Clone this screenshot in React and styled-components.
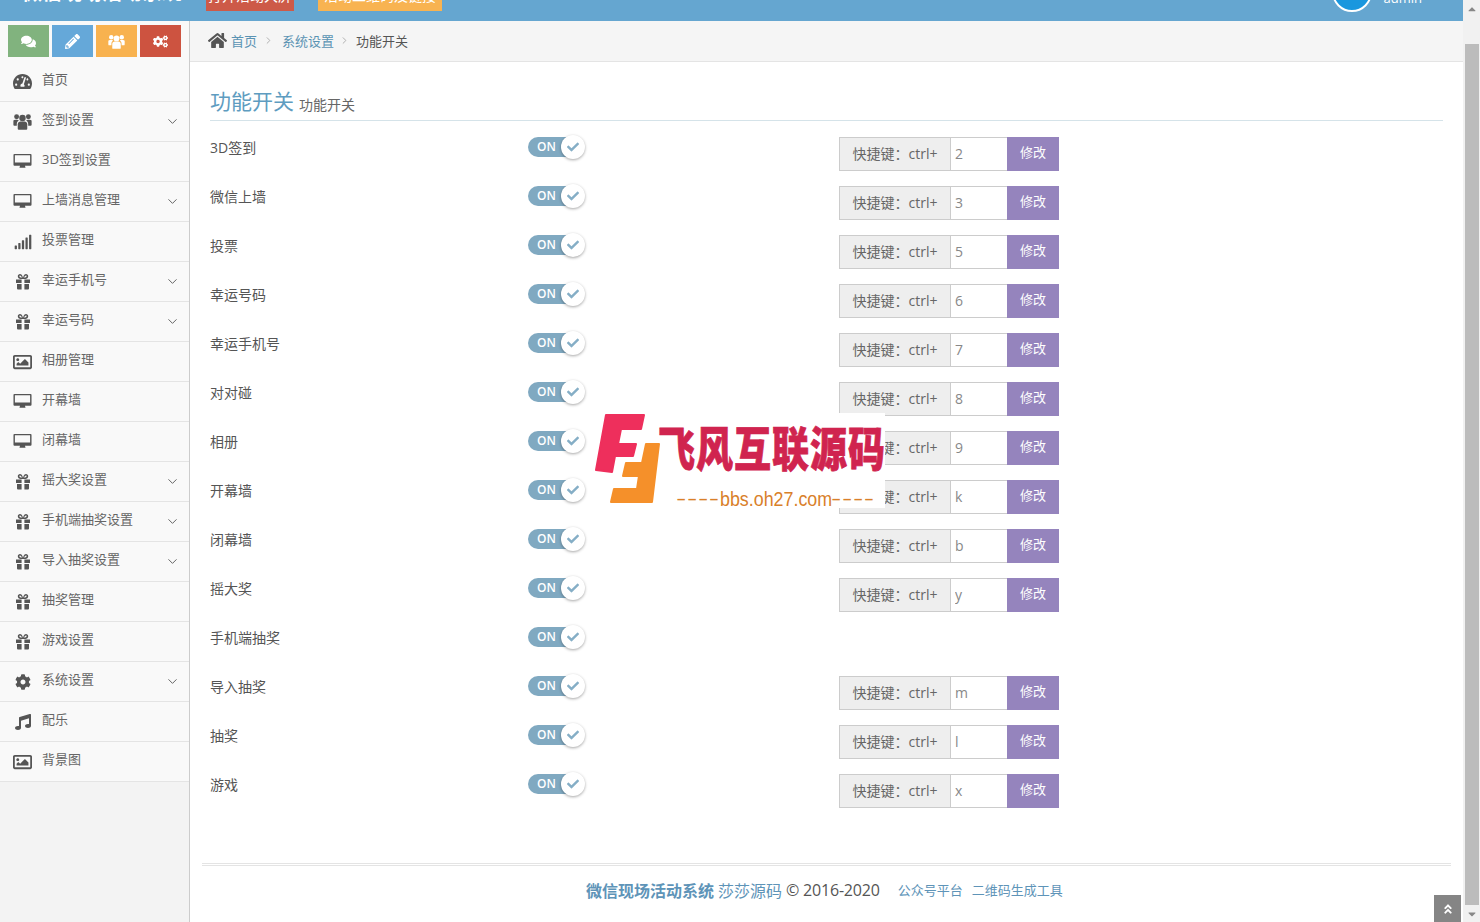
import React from 'react';
import styled, { createGlobalStyle } from 'styled-components';
import { FaComments, FaPencilAlt, FaCogs, FaTachometerAlt, FaSignal, FaRegImage, FaCog, FaMusic, FaHome, FaCheck, FaAngleDoubleUp, FaCaretUp, FaCaretDown } from 'react-icons/fa';
import { ChevronDown, ChevronRight } from 'lucide-react';

const Global = createGlobalStyle`
  html, body { margin: 0; padding: 0; height: 922px; overflow: hidden; background: #fff; }
  * { box-sizing: border-box; }
  body { font-family: "Open Sans", "Noto Sans CJK SC", sans-serif; color: #555; }
`;

const Shell = styled.div`
  position: relative;
  display: flex;
  width: 1480px;
  height: 922px;
  overflow: hidden;
`;
const Page = styled.div`
  flex: 1;
  min-width: 0;
  display: flex;
  flex-direction: column;
`;
const TopBar = styled.header`
  height: 21px;
  flex: none;
  background: #65a6d0;
  display: flex;
  align-items: flex-end;
  overflow: hidden;
  padding-left: 22px;
  color: #fff;
`;
const Brand = styled.div`
  width: 184px;
  font-size: 20px;
  line-height: 26px;
  font-weight: 700;
  flex: none;
  margin-bottom: 15px;
`;
const TopButton = styled.div`
  flex: none;
  width: ${p => p.$w}px;
  height: 30px;
  margin-right: 24px;
  margin-bottom: 10px;
  background: ${p => p.$bg};
  font-size: 14px;
  line-height: 30px;
  text-align: center;
  color: #fff;
  white-space: nowrap;
`;
const UserBox = styled.div`
  margin-left: auto;
  display: flex;
  align-items: flex-end;
  padding-right: 41px;
  margin-bottom: 9px;
`;
const Avatar = styled.div`
  width: 40px;
  height: 40px;
  border-radius: 50%;
  background: #1a97de;
  border: 2px solid #fff;
  margin-right: 12px;
`;
const UserName = styled.div`
  font-size: 13px;
  line-height: 20px;
  margin-bottom: 4px;
`;
const Body = styled.div`
  flex: 1;
  min-height: 0;
  display: flex;
`;
const Side = styled.aside`
  width: 190px;
  flex: none;
  background: #f3f3f3;
  border-right: 1px solid #ccc;
`;
const Shortcuts = styled.div`
  height: 41px;
  display: flex;
  gap: 3px;
  padding: 4px 0 0 8px;
  background: #f9f9f9;
`;
const Shortcut = styled.div`
  width: 41px;
  height: 32px;
  background: ${p => p.$bg};
  display: flex;
  align-items: center;
  justify-content: center;
  color: #fff;
  font-size: 15px;
`;
const NavList = styled.nav`
  display: flex;
  flex-direction: column;
  background: #f9f9f9;
`;
const NavItem = styled.div`
  height: 40px;
  display: flex;
  align-items: center;
  border-bottom: 1px solid #e4e4e4;
  font-size: 13px;
  color: #666;
  padding-bottom: 6px;
`;
const NavIcon = styled.span`
  width: 42px;
  flex: none;
  padding-left: 13px;
  padding-right: 10px;
  display: flex;
  align-items: center;
  justify-content: center;
  color: #555;
  transform: translateY(3px);
`;
const NavCaret = styled.span`
  margin-left: auto;
  padding-right: 9px;
  display: flex;
  color: #666;
  transform: translateY(3px);
`;
const Main = styled.main`
  flex: 1;
  min-width: 0;
  display: flex;
  flex-direction: column;
`;
const Crumbs = styled.div`
  height: 41px;
  flex: none;
  background: #f5f5f5;
  border-bottom: 1px solid #e4e4e4;
  display: flex;
  align-items: center;
  padding: 0 0 2px 18px;
  font-size: 13px;
  color: #555;
`;
const HomeGlyph = styled.span`
  font-size: 19px;
  display: flex;
  color: #555;
  margin-right: 4px;
`;
const CrumbLink = styled.span`
  color: #5a93b3;
`;
const CrumbSep = styled.span`
  display: flex;
  color: #aaa;
  margin: 1px ${p => p.$after}px 0 ${p => p.$before}px;
`;
const Content = styled.div`
  flex: 1;
  padding: 0 12px;
  display: flex;
  flex-direction: column;
`;
const TitleBar = styled.h3`
  margin: 26px 8px 16px;
  height: 33px;
  border-bottom: 1px solid #d5e3e9;
  font-weight: 400;
  font-size: 21px;
  line-height: 28px;
  color: #5e9cc0;
  display: flex;
  align-items: flex-end;
  white-space: nowrap;
  padding-bottom: 5px;
`;
const TitleSmall = styled.small`
  font-size: 14px;
  line-height: 21px;
  color: #666;
  margin-left: 5px;
`;
const Rows = styled.div`
  display: flex;
  flex-direction: column;
  padding-left: 8px;
`;
const Row = styled.div`
  height: 49px;
  display: grid;
  grid-template-columns: 318px 311px 220px;
  align-items: start;
`;
const RowLabel = styled.div`
  font-size: 14px;
  line-height: 22px;
  color: #555;
`;
const Toggle = styled.div`
  position: relative;
  width: 50px;
  height: 20px;
  background: #80a9c1;
  border-radius: 10px;
  color: #fff;
  font-size: 12px;
  font-weight: 600;
  line-height: 19px;
  padding-left: 9px;
`;
const Knob = styled.span`
  position: absolute;
  left: 33px;
  top: -2px;
  width: 24px;
  height: 24px;
  border-radius: 50%;
  background: #fff;
  box-shadow: 0 1px 3px rgba(0, 0, 0, 0.35);
  display: flex;
  align-items: center;
  justify-content: center;
  color: #85aec6;
  font-size: 12px;
`;
const KeyGroup = styled.div`
  display: flex;
  height: 34px;
  width: 220px;
`;
const KeyAddon = styled.div`
  width: 112px;
  flex: none;
  background: #eee;
  border: 1px solid #ccc;
  font-size: 14px;
  line-height: 32px;
  text-align: center;
  color: #666;
`;
const KeyInput = styled.input`
  width: 56px;
  flex: none;
  border: 1px solid #ccc;
  border-left: 0;
  border-right: 0;
  padding: 0 4px 2px;
  font-family: inherit;
  font-size: 14px;
  color: #888;
  outline: none;
  background: #fff;
`;
const KeyButton = styled.button`
  width: 52px;
  flex: none;
  border: 0;
  background: #9584bd;
  color: #fff;
  font-family: inherit;
  font-size: 13px;
  padding: 0 0 5px;
`;
const Foot = styled.footer`
  margin-top: 40px;
  border-top: 3px double #e4e4e4;
  display: flex;
  align-items: center;
  padding-left: 384px;
  height: 50px;
  white-space: nowrap;
  font-size: 16px;
  color: #555;
`;
const FootBrand = styled.b`
  color: #5e94b8;
  font-weight: 700;
  margin-right: 4px;
`;
const FootVendor = styled.span`
  color: #5e94b8;
  margin-right: 4px;
`;
const FootYear = styled.span`
  letter-spacing: -0.2px;
`;
const FootLink = styled.span`
  color: #5e94b8;
  font-size: 13px;
  margin-left: ${p => p.$gap}px;
`;
const Scrollbar = styled.div`
  width: 17px;
  flex: none;
  background: #f1f1f1;
  display: flex;
  flex-direction: column;
  align-items: center;
  color: #666;
  font-size: 12px;
`;
const ScrollEnd = styled.div`
  height: ${p => p.$h}px;
  flex: none;
  width: 100%;
  display: flex;
  justify-content: center;
  align-items: ${p => p.$align};
  padding: ${p => p.$pad};
  color: #888;
`;
const Thumb = styled.div`
  flex: 1;
  width: 14px;
  margin-left: 1px;
  background: #bcbcbc;
`;
const BackTop = styled.div`
  position: absolute;
  left: 1434px;
  top: 895px;
  width: 27px;
  height: 27px;
  background: #858585;
  color: #fff;
  display: flex;
  align-items: center;
  justify-content: center;
  font-size: 12px;
`;
const Stamp = styled.div`
  position: absolute;
  left: 592px;
  top: 413px;
  width: 293px;
  height: 95px;
  background: #fff;
`;
const StampMark = styled.svg`
  position: absolute;
  left: 0;
  top: 0;
`;
const StampName = styled.div`
  position: absolute;
  left: 66px;
  top: 8px;
  width: 228px;
  font-family: "Noto Sans CJK SC", sans-serif;
  font-weight: 900;
  font-size: 37px;
  line-height: 50px;
  letter-spacing: 1px;
  color: #d0244f;
  -webkit-text-stroke: 0.6px #d0244f;
  white-space: nowrap;
  transform: scaleY(1.25);
`;
const StampUrl = styled.div`
  position: absolute;
  left: 85px;
  top: 74px;
  font-family: "Liberation Sans", sans-serif;
  font-size: 21px;
  line-height: 24px;
  color: #d9802a;
  white-space: nowrap;
  display: flex;
`;
const StampDash = styled.span`
  font-size: 15px;
  font-weight: 700;
  letter-spacing: 2.6px;
  width: 43px;
  flex: none;
`;
const StampHost = styled.span`
  width: 112px;
  flex: none;
  transform: scaleX(0.85);
  transform-origin: left center;
`;

const GiftIcon = () => (
  <svg width="16" height="17" viewBox="0 0 16 17" fill="#555">
    <path d="M1 6.5 H6.6 V10 H1 Z M9.4 6.5 H15 V10 H9.4 Z M2 11 H6.6 V16.5 H3 Q2 16.5 2 15.5 Z M9.4 11 H14 V15.5 Q14 16.5 13 16.5 H9.4 Z" />
    <path d="M8 6 C6 6 3 6 2.8 3.4 C2.7 1.4 5 0.4 6.4 1.6 C7.3 2.4 7.7 3.6 8 5 C8.3 3.6 8.7 2.4 9.6 1.6 C11 0.4 13.3 1.4 13.2 3.4 C13 6 10 6 8 6 Z M6.8 4.8 C6.5 3.5 5.8 2.6 5 2.6 C4 2.6 4 4.8 6.8 4.8 Z M9.2 4.8 C12 4.8 12 2.6 11 2.6 C10.2 2.6 9.5 3.5 9.2 4.8 Z" fillRule="evenodd" />
  </svg>
);
const DesktopIcon = () => (
  <svg width="20" height="17" viewBox="0 0 20 17" fill="#555">
    <path fillRule="evenodd" d="M1.5 0.5 H18.5 Q19.5 0.5 19.5 1.5 V12 Q19.5 13 18.5 13 H12.6 L13.2 15.2 H6.8 L7.4 13 H1.5 Q0.5 13 0.5 12 V1.5 Q0.5 0.5 1.5 0.5 Z M2 2 V9.5 H18 V2 Z" />
  </svg>
);
const GroupIcon = ({ color = '#555', size = 19 }) => (
  <svg width={size} height={size} viewBox="0 0 20 20" fill={color}>
    <circle cx="10" cy="6.4" r="3.4" />
    <circle cx="3.8" cy="5" r="2.6" />
    <circle cx="16.2" cy="5" r="2.6" />
    <path d="M5 13 C5 10.6 6.5 10 10 10 C13.5 10 15 10.6 15 13 V17.6 Q15 18.6 14 18.6 H6 Q5 18.6 5 17.6 Z" />
    <path d="M0.4 9.5 C0.4 8.4 1.6 8.2 3.8 8.2 C5 8.2 5.6 8.4 6 8.9 C4.6 9.8 4 11 4 13 V14.4 H1.4 Q0.4 14.4 0.4 13.4 Z" />
    <path d="M19.6 9.5 C19.6 8.4 18.4 8.2 16.2 8.2 C15 8.2 14.4 8.4 14 8.9 C15.4 9.8 16 11 16 13 V14.4 H18.6 Q19.6 14.4 19.6 13.4 Z" />
  </svg>
);
const Gauge = () => <FaTachometerAlt size={19} />;
const Bars = () => <FaSignal size={18} />;
const Picture = () => <FaRegImage size={20} />;
const Gear = () => <FaCog size={16} />;
const Note = () => <FaMusic size={16} />;
const Group = () => <GroupIcon />;

const nav = [
  [Gauge, '首页', 0],
  [Group, '签到设置', 1],
  [DesktopIcon, '3D签到设置', 0],
  [DesktopIcon, '上墙消息管理', 1],
  [Bars, '投票管理', 0],
  [GiftIcon, '幸运手机号', 1],
  [GiftIcon, '幸运号码', 1],
  [Picture, '相册管理', 0],
  [DesktopIcon, '开幕墙', 0],
  [DesktopIcon, '闭幕墙', 0],
  [GiftIcon, '摇大奖设置', 1],
  [GiftIcon, '手机端抽奖设置', 1],
  [GiftIcon, '导入抽奖设置', 1],
  [GiftIcon, '抽奖管理', 0],
  [GiftIcon, '游戏设置', 0],
  [Gear, '系统设置', 1],
  [Note, '配乐', 0],
  [Picture, '背景图', 0],
];

const rows = [
  ['3D签到', '2'], ['微信上墙', '3'], ['投票', '5'], ['幸运号码', '6'], ['幸运手机号', '7'],
  ['对对碰', '8'], ['相册', '9'], ['开幕墙', 'k'], ['闭幕墙', 'b'], ['摇大奖', 'y'],
  ['手机端抽奖', null], ['导入抽奖', 'm'], ['抽奖', 'l'], ['游戏', 'x'],
];

export default function App() {
  return (
    <Shell>
      <Global />
      <Page>
        <TopBar>
          <Brand>微信现场活动系统</Brand>
          <TopButton $w={88} $bg="#cd5a48">打开活动大屏</TopButton>
          <TopButton $w={124} $bg="#f8b351">活动二维码及链接</TopButton>
          <UserBox>
            <Avatar />
            <UserName>admin</UserName>
          </UserBox>
        </TopBar>
        <Body>
          <Side>
            <Shortcuts>
              <Shortcut $bg="#81b37e"><FaComments /></Shortcut>
              <Shortcut $bg="#65a8d9"><FaPencilAlt /></Shortcut>
              <Shortcut $bg="#f8b24f"><GroupIcon color="#fff" size={17} /></Shortcut>
              <Shortcut $bg="#cd5340"><FaCogs /></Shortcut>
            </Shortcuts>
            <NavList>
              {nav.map(([Icon, label, caret]) => (
                <NavItem key={label}>
                  <NavIcon><Icon /></NavIcon>
                  {label}
                  {caret ? <NavCaret><ChevronDown size={15} strokeWidth={1.6} /></NavCaret> : null}
                </NavItem>
              ))}
            </NavList>
          </Side>
          <Main>
            <Crumbs>
              <HomeGlyph><FaHome /></HomeGlyph>
              <CrumbLink>首页</CrumbLink>
              <CrumbSep $before={6} $after={8}><ChevronRight size={11} /></CrumbSep>
              <CrumbLink>系统设置</CrumbLink>
              <CrumbSep $before={5} $after={6}><ChevronRight size={11} /></CrumbSep>
              功能开关
            </Crumbs>
            <Content>
              <TitleBar>功能开关<TitleSmall>功能开关</TitleSmall></TitleBar>
              <Rows>
                {rows.map(([label, key]) => (
                  <Row key={label}>
                    <RowLabel>{label}</RowLabel>
                    <Toggle>ON<Knob><FaCheck /></Knob></Toggle>
                    {key ? (
                      <KeyGroup>
                        <KeyAddon>快捷键：ctrl+</KeyAddon>
                        <KeyInput readOnly value={key} />
                        <KeyButton>修改</KeyButton>
                      </KeyGroup>
                    ) : null}
                  </Row>
                ))}
              </Rows>
              <Foot>
                <FootBrand>微信现场活动系统</FootBrand>
                <FootVendor>莎莎源码</FootVendor>
                <FootYear>© 2016-2020</FootYear>
                <FootLink $gap={18}>公众号平台</FootLink>
                <FootLink $gap={9}>二维码生成工具</FootLink>
              </Foot>
            </Content>
          </Main>
        </Body>
      </Page>
      <Scrollbar>
        <ScrollEnd $h={44} $align="flex-start" $pad="3px 0 0"><FaCaretUp /></ScrollEnd>
        <Thumb />
        <ScrollEnd $h={17} $align="center" $pad="0"><FaCaretDown /></ScrollEnd>
      </Scrollbar>
      <BackTop><FaAngleDoubleUp /></BackTop>
      <Stamp>
        <StampMark width="70" height="95" viewBox="0 0 70 95">
          <path d="M14 2 H52 L49 16 H29 L26 31 H44 L41 43 H23 L20 59 L4 57 Z" fill="#ee2f5c" stroke="#ee2f5c" strokeWidth="2" strokeLinejoin="round" />
          <path d="M54 31 H67 L60 89 H19 L22 76 H45 L47 63 H31 L34 50 H50 Z" fill="#f5902a" stroke="#f5902a" strokeWidth="2" strokeLinejoin="round" />
        </StampMark>
        <StampName>飞风互联源码</StampName>
        <StampUrl>
          <StampDash>––––</StampDash>
          <StampHost>bbs.oh27.com</StampHost>
          <StampDash>––––</StampDash>
        </StampUrl>
      </Stamp>
    </Shell>
  );
}
